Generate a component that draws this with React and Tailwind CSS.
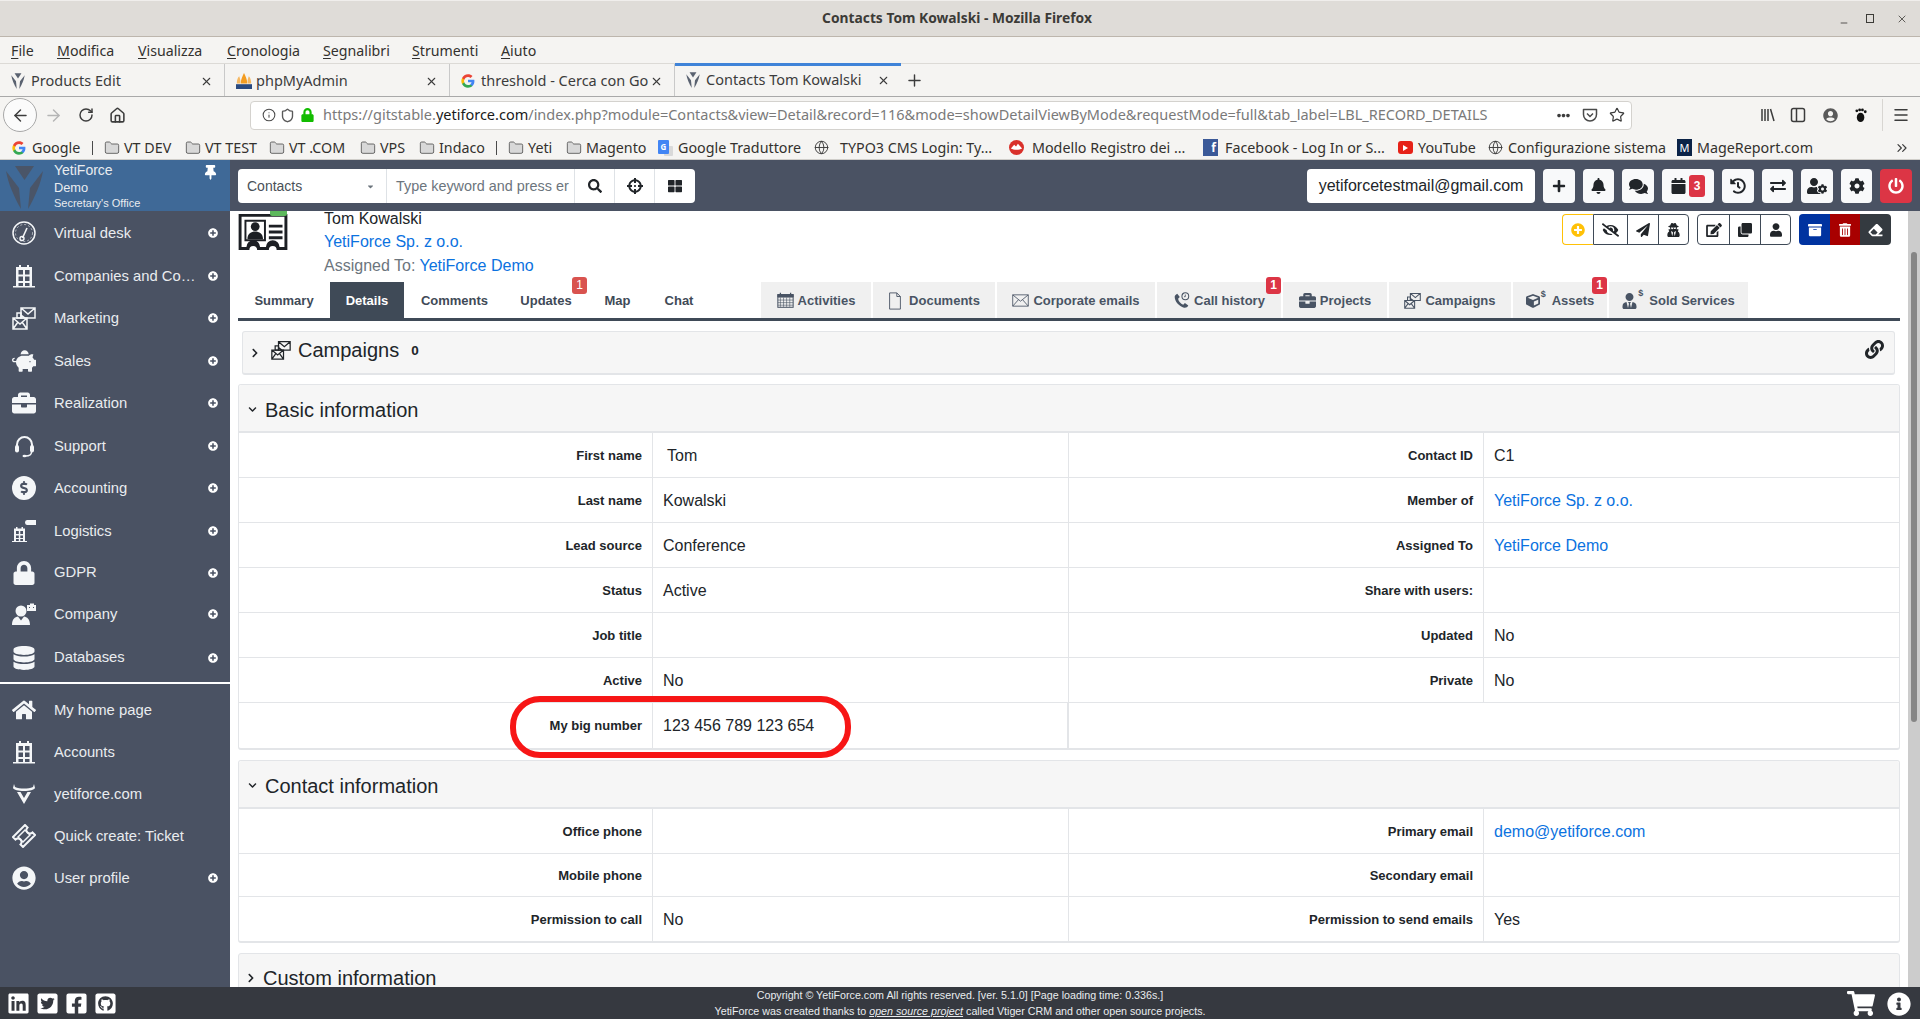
import React from "react";
import {
  FaPlus, FaBell, FaComments, FaCalendar, FaHistory, FaExchangeAlt, FaUserCog, FaCog, FaPowerOff,
  FaSearch, FaCrosshairs, FaThLarge, FaPlusCircle, FaEyeSlash, FaPaperPlane, FaUserSecret, FaEdit, FaClone,
  FaUser, FaArchive, FaTrashAlt, FaEraser, FaLink, FaChevronRight, FaChevronDown, FaLinkedin, FaTwitterSquare,
  FaFacebookSquare, FaGithubSquare, FaShoppingCart, FaInfoCircle, FaThumbtack, FaHome, FaPiggyBank, FaBriefcase,
  FaLock, FaDatabase, FaUserCircle, FaDollarSign, FaCaretDown, FaEllipsisH, FaUserTie, FaCube,
} from "react-icons/fa";
import { ArrowLeft, ArrowRight, RotateCw, Home, Info, Shield, Star, X, Plus, Minus, Folder, Globe, ChevronsRight, Menu } from "lucide-react";

const YLogo = ({ className = "", color = "#5a6270" }) => (
  <svg viewBox="0 0 37 44" className={className} fill={color}>
    <path d="M9 1h19l-9.500 14z" />
    <path d="M0 6l13 17 2 21C8 32 2 18 0 6z" />
    <path d="M37 6L24 23l-2 21c7-12 13-26 15-38z" />
  </svg>
);

const Building = ({ className = "" }) => (
  <svg viewBox="0 0 24 24" className={className} fill="currentColor" fillRule="evenodd">
    <path d="M4 3h3V1h2v2h6V1h2v2h3v19h3v1.500H1V22h3zM6.500 6v4.500h4.500V6zM13 6v4.500h4.500V6zM6.500 12.500V17h4.500v-4.500zM13 12.500V17h4.500v-4.500zM6.500 19v3h4.500v-3zM13 19v3h4.500v-3z" />
  </svg>
);

const Envelopes = ({ className = "" }) => (
  <svg viewBox="0 0 24 24" className={className} fill="none" stroke="currentColor" strokeWidth="1.500">
    <path d="M9 2h14v10H9zM9 2l7 6 7-6M13 12l-4-3" />
    <path d="M1 12h14v11H1zM1 12l7 6 7-6M1 23l5-7M15 23l-5-7" />
    <path d="M5 7h4v5H5z" />
  </svg>
);

const Gauge = ({ className = "" }) => (
  <svg viewBox="0 0 24 24" className={className} fill="none" stroke="currentColor">
    <circle cx="12" cy="12" r="11" strokeWidth="1.500" />
    <circle cx="12" cy="12" r="8.500" strokeWidth="0.600" strokeDasharray="2 2" />
    <path d="M10.500 17L15 7" strokeWidth="1.600" />
    <circle cx="10" cy="17.500" r="2" strokeWidth="1.400" />
  </svg>
);

const Headset = ({ className = "" }) => (
  <svg viewBox="0 0 24 24" className={className}>
    <path d="M5 15V10.500a7.500 7.500 0 0 1 15 0V15" fill="none" stroke="currentColor" strokeWidth="2" />
    <rect x="3" y="11" width="4" height="7.500" rx="2" fill="currentColor" />
    <rect x="18" y="11" width="4" height="7.500" rx="2" fill="currentColor" />
    <path d="M19.500 18c0 3-3 4-6 4" fill="none" stroke="currentColor" strokeWidth="1.400" />
    <ellipse cx="12.500" cy="22" rx="2" ry="1.200" fill="currentColor" />
  </svg>
);

const Logistics = ({ className = "" }) => (
  <svg viewBox="0 0 24 24" className={className} fill="currentColor" fillRule="evenodd">
    <path d="M2 9.500h2V8h1.500v1.500h4V8H11v1.500h2V22h2v1H0v-1h2zM4 12v3h2.800v-3zM8.300 12v3H11v-3zM4 16.500V19h2.800v-2.500zM8.300 16.500V19H11v-2.500zM4 20v2h2.800v-2zM8.300 20v2H11v-2z" />
    <path d="M15 1h9v5h-9a2.500 2.500 0 0 1-2-2.500A2.500 2.500 0 0 1 15 1z" />
  </svg>
);

const CompanyIcon = ({ className = "" }) => (
  <svg viewBox="0 0 24 24" className={className} fill="currentColor">
    <circle cx="9" cy="9" r="5.500" />
    <path d="M0 23c0-6 3-8 6-8.500l3 4 3-4c3 .5 6 2.500 6 8.500z" />
    <path fillRule="evenodd" d="M15 3h3V1.500h4V3h2v6h-9zM17 5v1h1V5zM21 5v1h1V5z" />
  </svg>
);

const YetiHorn = ({ className = "" }) => (
  <svg viewBox="0 0 24 24" className={className} fill="currentColor">
    <path d="M2 2l1 3c5 2 13 2 18 0l1-3 1 4c-1 2-5 3-11 3S2 8 1 6z" />
    <path d="M5 10l7 12 7-12h-3.500L12 16 8.500 10z" />
  </svg>
);

const Ticket = ({ className = "" }) => (
  <svg viewBox="0 0 24 24" className={className} fill="none" stroke="currentColor" strokeWidth="2">
    <path d="M1 13L13 1l2.500 2.500a2 2 0 0 0 5 5L23 11 11 23l-2.500-2.500a2 2 0 0 0-5-5z" />
    <path d="M6 13l7-7 5 5-7 7z" strokeWidth="1.500" />
  </svg>
);

const IdCard = () => (
  <svg viewBox="0 0 50 40" className="w-[50px] h-[39px] text-[#1c1f24]" fill="currentColor">
    <path fillRule="evenodd" d="M0 3h50v37h-11a4 4 0 0 0-8 0H19a4 4 0 0 0-8 0H0zM3 6v31h5a7 7 0 0 1 14 0h6a7 7 0 0 1 14 0h5V6z" />
    <path fillRule="evenodd" d="M6 9h22v22H6zm2 2v18h18V11z" />
    <circle cx="17" cy="16" r="4.500" />
    <path d="M9 29c0-6 4-8 8-8s8 2 8 8z" />
    <path d="M31 14h14v3H31zM31 20h14v3H31zM31 26h14v3H31z" />
  </svg>
);

const Phone = ({ className = "" }) => (
  <svg viewBox="0 0 20 20" className={className} fill="currentColor">
    <path d="M5 2l3 4-2 2c.5 3 3 6 6 7l2-2 4 3c-1 2-3 3-5 2.500C7 17 2 11 2 6c0-2 1-3 3-4z" />
    <circle cx="14.500" cy="5" r="4" fill="none" stroke="currentColor" strokeWidth="1.200" />
    <path d="M14.500 3v2.500h-1.500" fill="none" stroke="currentColor" strokeWidth="1" />
  </svg>
);

const CalIcon = ({ className = "" }) => (
  <svg viewBox="0 0 20 20" className={className} fill="none" stroke="currentColor">
    <rect x="1" y="3" width="18" height="15" strokeWidth="1.200" />
    <path d="M1 3h18v3H1z" fill="currentColor" />
    <path d="M4 1v3M16 1v3" strokeWidth="1.500" />
    <path d="M4 6.500v11M7.700 6.500v11M11.300 6.500v11M15 6.500v11M1 9.500h18M1 12.500h18M1 15.500h18" strokeWidth="0.700" />
  </svg>
);

const DocIcon = ({ className = "" }) => (
  <svg viewBox="0 0 14 20" className={className} fill="none" stroke="currentColor" strokeWidth="1">
    <path d="M1 1h8l4 4v14H1zM9 1v4h4" />
  </svg>
);

const MailIcon = ({ className = "" }) => (
  <svg viewBox="0 0 24 18" className={className} fill="none" stroke="currentColor" strokeWidth="1.200">
    <path d="M1 1h22v16H1zM1 1l11 9 11-9M1 17l8-9M23 17l-8-9" />
  </svg>
);

const Pocket = ({ className = "" }) => (
  <svg viewBox="0 0 16 16" className={className} fill="none" stroke="currentColor" strokeWidth="1.500">
    <path d="M1.500 2.500h13v5a6.500 6.500 0 0 1-13 0z" strokeLinejoin="round" />
    <path d="M5 6.500l3 3 3-3" />
  </svg>
);

const GoogleG = ({ className = "" }) => (
  <svg viewBox="0 0 24 24" className={className}>
    <path fill="#4285F4" d="M23 12.300c0-.8-.1-1.600-.2-2.300H12v4.300h6.200c-.3 1.400-1.100 2.600-2.300 3.400v2.800h3.700c2.100-2 3.400-4.900 3.400-8.200z" />
    <path fill="#34A853" d="M12 23.500c3.100 0 5.700-1 7.600-2.800l-3.700-2.800c-1 .7-2.300 1.100-3.900 1.100-3 0-5.500-2-6.400-4.700H1.800v2.900C3.700 20.900 7.500 23.500 12 23.500z" />
    <path fill="#FBBC05" d="M5.600 14.300c-.5-1.400-.5-3 0-4.500V6.900H1.800c-1.600 3.200-1.600 7 0 10.300z" />
    <path fill="#EA4335" d="M12 5.100c1.700 0 3.200.6 4.400 1.700l3.300-3.300C17.700 1.600 15.100.5 12 .5 7.500.5 3.700 3.100 1.800 6.900l3.800 2.900C6.500 7.100 9 5.100 12 5.100z" />
  </svg>
);

const PmaIcon = () => (
  <svg viewBox="0 0 20 20" className="w-[16px] h-[18px]">
    <path d="M10 0c2 4 4 8 4 13H6c0-5 2-9 4-13z" fill="#f39c21" />
    <path d="M4 4c1 3 2 6 1.500 9H1C1 9 2 6 4 4zM16 4c-1 3-2 6-1.500 9H19c0-4-1-7-3-9z" fill="#f6b862" />
    <rect x="0" y="14" width="20" height="6" fill="#2a4a80" />
  </svg>
);

const TranslateIcon = () => (
  <span className="relative w-[15px] h-[16px] block">
    <span className="absolute right-0 bottom-0 w-[9px] h-[10px] bg-[#d9d9d9] rounded-[1px]" />
    <span className="absolute left-0 top-0 w-[11px] h-[14px] bg-[#4285f4] rounded-[1px] text-white text-[8px] font-bold leading-[14px] text-center">G</span>
  </span>
);

const ModelloIcon = () => (
  <svg viewBox="0 0 16 16" className="w-[15px] h-[15px]">
    <circle cx="8" cy="8" r="8" fill="#d9302a" />
    <path d="M2 9l3.500-4 2 2 2-3 4.500 5c-3 2-9 2-12 0z" fill="#fff" />
  </svg>
);

const FolderIc = () => <Folder size={16} strokeWidth={1.200} className="text-[#4a4a4a] fill-[#d8d8d8]" />;

const bookmarks = [
  { w: "w-[80px]", label: "Google", icon: <GoogleG className="w-[14px] h-[14px]" /> },
  { sep: true },
  { w: "w-[81px]", label: "VT DEV", icon: <FolderIc /> },
  { w: "w-[84px]", label: "VT TEST", icon: <FolderIc /> },
  { w: "w-[91px]", label: "VT .COM", icon: <FolderIc /> },
  { w: "w-[59px]", label: "VPS", icon: <FolderIc /> },
  { w: "w-[77px]", label: "Indaco", icon: <FolderIc /> },
  { sep: true },
  { w: "w-[58px]", label: "Yeti", icon: <FolderIc /> },
  { w: "w-[92px]", label: "Magento", icon: <FolderIc /> },
  { w: "w-[156px]", label: "Google Traduttore", icon: <TranslateIcon /> },
  { w: "w-[195px]", label: "TYPO3 CMS Login: Ty...", icon: <Globe size={15} strokeWidth={1.500} className="text-[#3c3c3c]" />, gapCls: "w-[26px]" },
  { w: "w-[194px]", label: "Modello Registro dei ...", icon: <ModelloIcon />, gapCls: "w-[23px]" },
  { w: "w-[195px]", label: "Facebook - Log In or S...", icon: <span className="w-[15px] h-[17px] bg-[#3b5998] text-white text-[12px] font-bold leading-[18px] text-right pr-[2px] block">f</span>, gapCls: "w-[22px]" },
  { w: "w-[90px]", label: "YouTube", icon: <span className="w-[15px] h-[13px] bg-[#e62117] rounded-[3px] flex items-center justify-center"><span className="block w-0 h-0 border-y-[3px] border-y-transparent border-l-[5px] border-l-white" /></span> },
  { w: "w-[189px]", label: "Configurazione sistema", icon: <Globe size={15} strokeWidth={1.500} className="text-[#3c3c3c]" /> },
  { w: "w-[180px]", label: "MageReport.com", icon: <span className="w-[15px] h-[17px] bg-[#0b2347] text-white text-[11px] leading-[17px] text-center block">M</span> },
];

const Tab = ({ label, icon, active }) => (
  <div className={`relative flex items-center h-full ${active ? "w-[226px] -mt-px" : "w-[225px] border-r border-[#c9c9c9] my-0"} pl-[11px] pr-[11px] pt-[2px] font-['Noto_Sans',sans-serif] text-[14.500px] text-[#3c3c3c]`}>
    {active && <div className="absolute left-0 right-0 top-0 h-[3px] bg-[#3f83d8]" />}
    <span className="w-[17px] flex-none flex items-center">{icon}</span>
    <span className="ml-[3px] flex-1 whitespace-nowrap">{label}</span>
    <X size={13} strokeWidth={2} className="text-[#3c3c3c] flex-none" />
  </div>
);

const SideRow = ({ icon, label, plus = true, h = "h-[42.500px]" }) => (
  <div className={`${h} flex items-center pl-[12px] text-white`}>
    <span className="w-[24px] h-[24px] flex items-center justify-center flex-none text-[#f4f6f8]">{icon}</span>
    <span className="ml-[18px] w-[141px] text-[14.800px] text-[#e9ecef] whitespace-nowrap">{label}</span>
    {plus && <FaPlusCircle className="ml-[13px] w-[10px] h-[10px] text-white flex-none" />}
  </div>
);

const TopBtn = ({ w, children, cls = "bg-[#f8f9fa] text-[#212529]" }) => (
  <div className={`${w} h-[34px] rounded-[4px] flex items-center justify-center ${cls}`}>{children}</div>
);

const LeftTab = ({ w, label, active, badge }) => (
  <div className={`${w} relative h-[36px] pt-px flex items-center justify-center text-[13px] font-bold ${active ? "bg-[#3f4a57] text-white" : "text-[#3f4a57]"}`}>
    {label}
    {badge && <span className="absolute right-0 -top-[5px] w-[15px] h-[17px] rounded-[3px] bg-[#d9534f] text-white text-[12px] font-normal leading-[17px] text-center">1</span>}
  </div>
);

const RightTab = ({ w, icon, label, badge }) => (
  <div className={`${w} relative h-[36px] pt-px bg-[#f0f0f0] flex items-center justify-center gap-[4px] text-[13px] font-bold text-[#495464]`}>
    {icon}
    <span>{label}</span>
    {badge && <span className="absolute right-0 -top-[5px] w-[15px] h-[17px] rounded-[3px] bg-[#dc3545] text-white text-[12px] font-bold leading-[17px] text-center">1</span>}
  </div>
);

const Dollar = ({ children }) => (
  <span className="relative flex items-center pr-[6px] mr-[2px]">
    {children}
    <span className="absolute right-0 -top-[4px] text-[9px] font-bold leading-none">$</span>
  </span>
);

const Link = ({ children }) => <span className="text-[#0b72e0]">{children}</span>;

const Cell = ({ label, value, last, wide }) => (
  <>
    <div className={`${last ? "w-[415px]" : "w-[414px]"} flex-none pr-[10px] ${wide ? "" : "pt-px"} text-right text-[13px] font-bold text-[#212529] border-r border-[#e3e5e8] h-full flex items-center justify-end`}>
      {label}
    </div>
    <div className={`${last ? "flex-1" : "w-[416px]"} flex-none h-full flex items-center pl-[10px] ${wide ? "" : "pt-[2px]"} text-[16px] text-[#212529] ${last ? "" : wide ? "border-r-2 border-[#e3e5e8]" : "border-r border-[#e3e5e8]"}`}>
      {value}
    </div>
  </>
);

const Row = ({ l1, v1, l2, v2, h = "h-[45px]", end, single }) => (
  <div className={`flex ${h} ${end ? "" : "border-b border-[#e3e5e8]"}`}>
    <Cell label={l1} value={v1} wide={single} />
    {!single && <Cell label={l2} value={v2} last />}
  </div>
);

const Panel = ({ title, children, mt }) => (
  <div className={`${mt} border border-[#e3e5e8] border-b-2 rounded-[3px] bg-white`}>
    <div className="h-[48px] bg-[#f6f6f6] border-b-2 border-[#e3e5e8] flex items-center pl-[9px] rounded-t-[3px]">
      <FaChevronDown className="w-[9px] h-[9px] text-[#212529] mt-[2px]" />
      <span className="ml-[8px] text-[20px] leading-[28px] text-[#212529] mt-[3px]">{title}</span>
    </div>
    {children}
  </div>
);

const GroupBtn = ({ w, children, cls = "text-[#212529]", br = true }) => (
  <div className={`${w} h-full flex items-center justify-center ${cls} ${br ? "border-r border-[#3f4a57]" : ""}`}>{children}</div>
);

export default function App() {
  return (
    <div className="relative w-[1920px] h-[1019px] overflow-hidden flex flex-col bg-white font-['Liberation_Sans',Arial,sans-serif]">
      {/* Window title */}
      <div className="h-[37px] flex-none bg-[#dfdcd8] border-b border-[#bdb6ad] border-t border-t-[#f0eeec] relative flex items-center justify-center font-['Noto_Sans',sans-serif] font-bold text-[13.800px] text-[#3c3b37]">
        <span className="-ml-[6px]">Contacts Tom Kowalski - Mozilla Firefox</span>
        <div className="absolute right-[12px] top-0 h-full flex items-center gap-[17px] text-[#3c3b37]">
          <Minus size={10} strokeWidth={2} className="mt-[8px]" />
          <span className="block w-[8px] h-[9px] border border-[#3c3b37]" />
          <X size={12} strokeWidth={1.600} className="ml-[5px]" />
        </div>
      </div>
      {/* Menu bar */}
      <div className="h-[27px] flex-none bg-[#f5f4f2] border-b border-[#dcdad6] flex items-center pl-[11px] pt-[2px] font-['Noto_Sans',sans-serif] text-[14.200px] text-[#33312e]">
        {[["F", "ile", "w-[46px]"], ["M", "odifica", "w-[81px]"], ["V", "isualizza", "w-[89px]"], ["C", "ronologia", "w-[96px]"], ["S", "egnalibri", "w-[89px]"], ["S", "trumenti", "w-[89px]"], ["A", "iuto", "w-[60px]"]].map(([a, b, w]) => (
          <span key={b} className={`${w} whitespace-nowrap`}><span className="underline underline-offset-2">{a}</span>{b}</span>
        ))}
      </div>
      {/* Tabs */}
      <div className="h-[33px] flex-none bg-[#f5f4f2] border-b border-[#a9a9a9] flex items-stretch">
        <Tab label="Products Edit" icon={<YLogo className="w-[14px] h-[16px]" />} />
        <Tab label="phpMyAdmin" icon={<PmaIcon />} />
        <Tab label="threshold - Cerca con Go" icon={<GoogleG className="w-[14px] h-[14px]" />} />
        <Tab label="Contacts Tom Kowalski" icon={<YLogo className="w-[14px] h-[16px]" />} active />
        <div className="ml-[4px] flex items-center text-[#3c3c3c]"><Plus size={19} strokeWidth={1.800} /></div>
      </div>
      {/* Nav */}
      <div className="h-[36px] flex-none bg-[#f5f4f2] flex items-center relative pl-[3px]">
        <div className="w-[34px] h-[34px] rounded-full border border-[#a8a8a8] bg-[#fbfbfb] flex items-center justify-center"><ArrowLeft size={19} strokeWidth={1.800} className="text-[#3c3c3c]" /></div>
        <ArrowRight size={19} strokeWidth={1.800} className="text-[#b5b5b5] ml-[7px]" />
        <RotateCw size={16} strokeWidth={2.200} className="text-[#3c3c3c] ml-[15px]" />
        <Home size={17} strokeWidth={2.200} className="text-[#3c3c3c] ml-[15px]" />
        <div className="ml-[124px] w-[1382px] h-[29px] bg-white border border-[#d4d2ce] rounded-[4px] flex items-center pl-[11px] pr-[6px]">
          <Info size={14} strokeWidth={1.800} className="text-[#4a4a4a]" />
          <Shield size={15} strokeWidth={2.200} className="text-[#5a5a5a] ml-[4px]" />
          <FaLock className="ml-[6px] w-[13px] h-[14px] text-[#12bc00]" />
          <span className="ml-[9px] font-['Noto_Sans',sans-serif] text-[14.500px] text-[#7a7a7a] whitespace-nowrap flex-1">https://gitstable.<span className="text-[#1a1a1a]">yetiforce.com</span>/index.php?module=Contacts&amp;view=Detail&amp;record=116&amp;mode=showDetailViewByMode&amp;requestMode=full&amp;tab_label=LBL_RECORD_DETAILS</span>
          <FaEllipsisH className="w-[13px] h-[13px] text-[#3c3c3c]" />
          <Pocket className="w-[16px] h-[16px] text-[#4a4a4a] ml-[12px]" />
          <Star size={16} strokeWidth={1.800} className="text-[#3c3c3c] ml-[11px]" />
        </div>
        <div className="ml-[128px] flex items-center text-[#3c3c3c]">
          <svg viewBox="0 0 16 16" className="w-[16px] h-[16px]" fill="none" stroke="currentColor" strokeWidth="1.500"><path d="M2 2v12M5 2v12M8 2v12M10.500 2l3.500 12" /></svg>
          <svg viewBox="0 0 16 16" className="w-[16px] h-[16px] ml-[14px]" fill="none" stroke="currentColor" strokeWidth="1.500"><rect x="1.500" y="1.500" width="13" height="13" rx="2" /><path d="M6.500 2v12" /></svg>
          <FaUserCircle className="ml-[17px] w-[15px] h-[15px] text-[#5a5a5a]" />
          <svg viewBox="0 0 16 16" className="w-[15px] h-[15px] ml-[16px]" fill="#111"><ellipse cx="7" cy="10" rx="4" ry="5" /><circle cx="3" cy="3" r="1.500" /><circle cx="6" cy="2" r="1.500" /><circle cx="9" cy="2" r="1.500" /><circle cx="12" cy="4" r="1.500" /></svg>
          <span className="block w-px h-[32px] bg-[#d8d6d2] ml-[13px]" />
          <Menu size={18} strokeWidth={2} className="ml-[9px]" />
        </div>
      </div>
      {/* Bookmarks */}
      <div className="h-[27px] flex-none bg-[#f5f4f2] border-b border-[#cfcdc9] flex items-center pl-[12px] pt-[3px] font-['Noto_Sans',sans-serif] text-[14.300px] text-[#33312e]">
        {bookmarks.map((b, i) =>
          b.sep ? (
            <span key={i} className="w-[12px] flex-none"><span className="block w-px h-[14px] bg-[#4a4a4a]" /></span>
          ) : (
            <span key={i} className={`${b.w} flex-none flex items-center whitespace-nowrap`}>
              <span className={`${b.gapCls || "w-[20px]"} flex-none flex items-center`}>{b.icon}</span>
              <span>{b.label}</span>
            </span>
          )
        )}
        <ChevronsRight size={16} strokeWidth={1.800} className="text-[#3c3c3c] ml-[37px]" />
      </div>

      {/* App */}
      <div className="flex-1 min-h-0 flex">
        {/* Sidebar */}
        <aside className="w-[230px] flex-none bg-[#4a5263]">
          <div className="h-[51px] bg-[#3f6997] relative pl-[54px] text-[#e9ecef]">
            <YLogo className="absolute left-[6px] top-[5px] w-[37px] h-[44px]" color="#4a5568" />
            <div className="text-[14px] leading-[17px] pt-[2px]">YetiForce</div>
            <div className="text-[12.800px] leading-[17px]">Demo</div>
            <div className="text-[11px] leading-[15px]">Secretary's Office</div>
            <FaThumbtack className="absolute right-[13px] top-[5px] w-[13px] h-[15px] text-white" />
          </div>
          <div className="pt-px">
            <SideRow icon={<Gauge className="w-[24px] h-[24px]" />} label="Virtual desk" />
            <SideRow icon={<Building className="w-[24px] h-[24px]" />} label="Companies and Co…" />
            <SideRow icon={<Envelopes className="w-[24px] h-[24px]" />} label="Marketing" />
            <SideRow icon={<FaPiggyBank className="w-[24px] h-[24px]" />} label="Sales" />
            <SideRow icon={<FaBriefcase className="w-[24px] h-[24px]" />} label="Realization" />
            <SideRow icon={<Headset className="w-[24px] h-[24px]" />} label="Support" />
            <SideRow icon={<span className="w-[24px] h-[24px] rounded-full bg-[#f4f6f8] flex items-center justify-center"><FaDollarSign className="w-[14px] h-[14px] text-[#4a5263]" /></span>} label="Accounting" />
            <SideRow icon={<Logistics className="w-[24px] h-[24px]" />} label="Logistics" />
            <SideRow h="h-[41px]" icon={<FaLock className="w-[22px] h-[24px]" />} label="GDPR" />
            <SideRow icon={<CompanyIcon className="w-[24px] h-[24px]" />} label="Company" />
            <SideRow h="h-[44px]" icon={<FaDatabase className="w-[22px] h-[24px]" />} label="Databases" />
          </div>
          <div className="mt-[2.500px] h-[2px] bg-white" />
          <div className="mt-[5px]">
            <SideRow h="h-[42px]" plus={false} icon={<FaHome className="w-[25px] h-[24px]" />} label="My home page" />
            <SideRow h="h-[42px]" plus={false} icon={<Building className="w-[24px] h-[24px]" />} label="Accounts" />
            <SideRow h="h-[42px]" plus={false} icon={<YetiHorn className="w-[24px] h-[24px]" />} label="yetiforce.com" />
            <SideRow h="h-[42px]" plus={false} icon={<Ticket className="w-[24px] h-[24px]" />} label="Quick create: Ticket" />
            <SideRow h="h-[42px]" icon={<FaUserCircle className="w-[24px] h-[24px]" />} label="User profile" />
          </div>
        </aside>

        {/* Right column */}
        <div className="flex-1 min-w-0 flex flex-col">
          {/* Top bar */}
          <div className="h-[51px] flex-none bg-[#4a5263] flex items-start justify-between pt-[9px] pl-[8px] pr-[8px]">
            <div className="h-[34px] w-[457px] bg-white rounded-[4px] flex overflow-hidden">
              <div className="w-[149px] flex items-center pl-[9px] pr-[11px] justify-between text-[14px] text-[#495057] border-r border-[#dee2e6]">
                Contacts <FaCaretDown className="w-[9px] h-[9px] text-[#6c757d]" />
              </div>
              <div className="w-[188px] pl-[9px] pt-px flex items-center text-[14.400px] text-[#6c757d] whitespace-nowrap border-r border-[#dee2e6]">
                Type keyword and press er
              </div>
              <div className="w-[40px] flex items-center justify-center border-r border-[#dee2e6]"><FaSearch className="w-[14px] h-[14px] text-[#212529]" /></div>
              <div className="w-[40px] flex items-center justify-center border-r border-[#dee2e6]"><FaCrosshairs className="w-[16px] h-[16px] text-[#212529]" /></div>
              <div className="flex-1 flex items-center justify-center"><FaThLarge className="w-[14px] h-[14px] text-[#212529]" /></div>
            </div>
            <div className="flex gap-2">
              <TopBtn w="w-[228px]" cls="bg-white text-[#212529] text-[16px]">yetiforcetestmail@gmail.com</TopBtn>
              <TopBtn w="w-[32px]"><FaPlus className="w-[14px] h-[14px]" /></TopBtn>
              <TopBtn w="w-[31px]"><FaBell className="w-[15px] h-[16px]" /></TopBtn>
              <TopBtn w="w-[32px]"><FaComments className="w-[19px] h-[17px]" /></TopBtn>
              <TopBtn w="w-[52px]">
                <FaCalendar className="w-[15px] h-[16px]" />
                <span className="ml-[3px] w-[16px] h-[22px] rounded-[3px] bg-[#dc3545] text-white text-[12px] font-bold flex items-center justify-center">3</span>
              </TopBtn>
              <TopBtn w="w-[32px]"><FaHistory className="w-[16px] h-[16px]" /></TopBtn>
              <TopBtn w="w-[31px]"><FaExchangeAlt className="w-[16px] h-[16px]" /></TopBtn>
              <TopBtn w="w-[32px]"><FaUserCog className="w-[20px] h-[16px]" /></TopBtn>
              <TopBtn w="w-[31px]"><FaCog className="w-[16px] h-[16px]" /></TopBtn>
              <TopBtn w="w-[32px]" cls="bg-[#dc3545] text-white"><FaPowerOff className="w-[16px] h-[16px]" /></TopBtn>
            </div>
          </div>
          {/* Content + scrollbar */}
          <div className="flex-1 min-h-0 flex">
            <div className="w-[1678px] flex-none px-[8px] overflow-hidden">
              <div className="h-[71px] flex justify-between">
                <div className="flex">
                  <div className="relative w-[50px] h-[39px] flex-none">
                    <span className="absolute left-[32px] top-0 w-[17px] h-[5px] bg-[#5cb85c] rounded-b-[2px]" />
                    <IdCard />
                  </div>
                  <div className="ml-[36px] -mt-[4px] text-[16px] text-[#212529]">
                    <div className="h-[23px] leading-[23px]">Tom Kowalski</div>
                    <div className="h-[24px] leading-[23px]"><Link>YetiForce Sp. z o.o.</Link></div>
                    <div className="h-[23px] leading-[23px] text-[#6c757d]">Assigned To: <Link>YetiForce Demo</Link></div>
                  </div>
                </div>
                <div className="flex mt-[3px] mr-[9px] h-[31px] gap-[8px]">
                  <div className="flex h-full">
                    <div className="w-[31px] h-full border border-r-0 border-[#ffc107] rounded-l-[4px] flex items-center justify-center"><FaPlusCircle className="w-[14px] h-[14px] text-[#ffc107]" /></div>
                    <div className="flex border border-[#3f4a57] rounded-r-[4px] h-full">
                      <GroupBtn w="w-[34px]"><FaEyeSlash className="w-[17px] h-[14px]" /></GroupBtn>
                      <GroupBtn w="w-[31px]"><FaPaperPlane className="w-[14px] h-[14px]" /></GroupBtn>
                      <GroupBtn w="w-[29px]" br={false}><FaUserSecret className="w-[13px] h-[14px]" /></GroupBtn>
                    </div>
                  </div>
                  <div className="flex border border-[#3f4a57] rounded-[4px] h-full">
                    <GroupBtn w="w-[32px]"><FaEdit className="w-[16px] h-[14px]" /></GroupBtn>
                    <GroupBtn w="w-[31px]"><FaClone className="w-[14px] h-[14px]" /></GroupBtn>
                    <GroupBtn w="w-[29px]" br={false}><FaUser className="w-[12px] h-[14px]" /></GroupBtn>
                  </div>
                  <div className="flex rounded-[4px] overflow-hidden h-full">
                    <div className="w-[31px] bg-[#0033a0] text-white flex items-center justify-center"><FaArchive className="w-[14px] h-[14px]" /></div>
                    <div className="w-[30px] bg-[#a80000] text-white flex items-center justify-center"><FaTrashAlt className="w-[12px] h-[14px]" /></div>
                    <div className="w-[31px] bg-[#343a40] text-white flex items-center justify-center"><FaEraser className="w-[15px] h-[14px]" /></div>
                  </div>
                </div>
              </div>
              {/* Tabs */}
              <div className="flex h-[39px] border-b-[3px] border-[#3f4a57]">
                <LeftTab w="w-[92px]" label="Summary" />
                <LeftTab w="w-[74px]" label="Details" active />
                <LeftTab w="w-[101px]" label="Comments" />
                <LeftTab w="w-[82px]" label="Updates" badge />
                <LeftTab w="w-[61px]" label="Map" />
                <LeftTab w="w-[62px]" label="Chat" />
                <div className="w-[51px]" />
                <div className="flex gap-[2px]">
                  <RightTab w="w-[110px]" icon={<CalIcon className="w-[17px] h-[17px]" />} label="Activities" />
                  <RightTab w="w-[122px]" icon={<DocIcon className="w-[14px] h-[18px] mr-[3px]" />} label="Documents" />
                  <RightTab w="w-[158px]" icon={<MailIcon className="w-[17px] h-[13px]" />} label="Corporate emails" />
                  <RightTab w="w-[124px]" icon={<Phone className="w-[17px] h-[17px]" />} label="Call history" badge />
                  <RightTab w="w-[104px]" icon={<FaBriefcase className="w-[17px] h-[17px]" />} label="Projects" />
                  <RightTab w="w-[122px]" icon={<Envelopes className="w-[17px] h-[17px]" />} label="Campaigns" />
                  <RightTab w="w-[94px]" icon={<Dollar><FaCube className="w-[14px] h-[14px]" /></Dollar>} label="Assets" badge />
                  <RightTab w="w-[139px]" icon={<Dollar><FaUserTie className="w-[15px] h-[16px]" /></Dollar>} label="Sold Services" />
                </div>
              </div>
              {/* Campaigns collapsed */}
              <div className="mt-[10px] ml-[4px] mr-[5px] h-[44px] bg-[#f6f6f6] border border-[#e3e5e8] border-b-2 rounded-[3px] flex items-center pl-[8px] pr-[10px]">
                <FaChevronRight className="w-[8px] h-[10px] text-[#212529]" />
                <Envelopes className="ml-[12px] w-[20px] h-[20px] text-[#212529] -mt-[6px]" />
                <span className="ml-[7px] text-[20px] text-[#212529] -mt-[6px]">Campaigns</span>
                <span className="ml-[12px] text-[13.500px] font-bold text-[#212529] -mt-[3px]">0</span>
                <FaLink className="ml-auto w-[19px] h-[19px] text-[#212529] -mt-[6px]" />
              </div>
              <Panel title="Basic information" mt="mt-[9px]">
                <Row l1="First name" v1={<span className="pl-[4px]">Tom</span>} l2="Contact ID" v2="C1" />
                <Row l1="Last name" v1="Kowalski" l2="Member of" v2={<Link>YetiForce Sp. z o.o.</Link>} />
                <Row l1="Lead source" v1="Conference" l2="Assigned To" v2={<Link>YetiForce Demo</Link>} />
                <Row l1="Status" v1="Active" l2="Share with users:" v2="" />
                <Row l1="Job title" v1="" l2="Updated" v2="No" />
                <Row l1="Active" v1="No" l2="Private" v2="No" />
                <Row l1="My big number" v1="123 456 789 123 654" single end />
              </Panel>
              <Panel title="Contact information" mt="mt-[10px]">
                <Row l1="Office phone" v1="" l2="Primary email" v2={<Link>demo@yetiforce.com</Link>} />
                <Row l1="Mobile phone" v1="" l2="Secondary email" v2="" h="h-[43px]" />
                <Row l1="Permission to call" v1="No" l2="Permission to send emails" v2="Yes" h="h-[44px]" end />
              </Panel>
              <div className="mt-[10px] h-[60px] bg-[#f6f6f6] border border-[#e3e5e8] rounded-[3px] flex items-start pt-[12px] pl-[8px]">
                <FaChevronRight className="w-[8px] h-[10px] text-[#212529] mt-[7px]" />
                <span className="ml-[8px] text-[20px] leading-[24px] text-[#212529]">Custom information</span>
              </div>
            </div>
            <div className="flex-1 bg-[#cccccc] pt-[41px] pl-[3px]">
              <div className="w-[6px] h-[470px] rounded-full bg-[#868686]" />
            </div>
          </div>
        </div>
      </div>

      {/* Footer */}
      <div className="h-[32px] flex-none bg-[#363940] relative flex text-white z-10">
        <div className="absolute left-[7px] top-[5px] flex gap-[6px]">
          <FaLinkedin className="w-[23px] h-[23px]" />
          <FaTwitterSquare className="w-[23px] h-[23px]" />
          <FaFacebookSquare className="w-[23px] h-[23px]" />
          <FaGithubSquare className="w-[23px] h-[23px]" />
        </div>
        <div className="flex-1 text-center text-[10.700px] text-[#e9ecef] leading-[16px]">
          <div>Copyright © YetiForce.com All rights reserved. [ver. 5.1.0] [Page loading time: 0.336s.]</div>
          <div>YetiForce was created thanks to <span className="italic underline">open source project</span> called Vtiger CRM and other open source projects.</div>
        </div>
        <div className="absolute right-[9px] top-[4px] flex items-center gap-[12px]">
          <FaShoppingCart className="w-[28px] h-[25px]" />
          <FaInfoCircle className="w-[24px] h-[24px]" />
        </div>
      </div>

      {/* Red annotation */}
      <div className="absolute left-[510px] top-[696px] w-[341px] h-[62px] rounded-[30px] border-[6px] border-[#f71616] pointer-events-none" />
    </div>
  );
}
